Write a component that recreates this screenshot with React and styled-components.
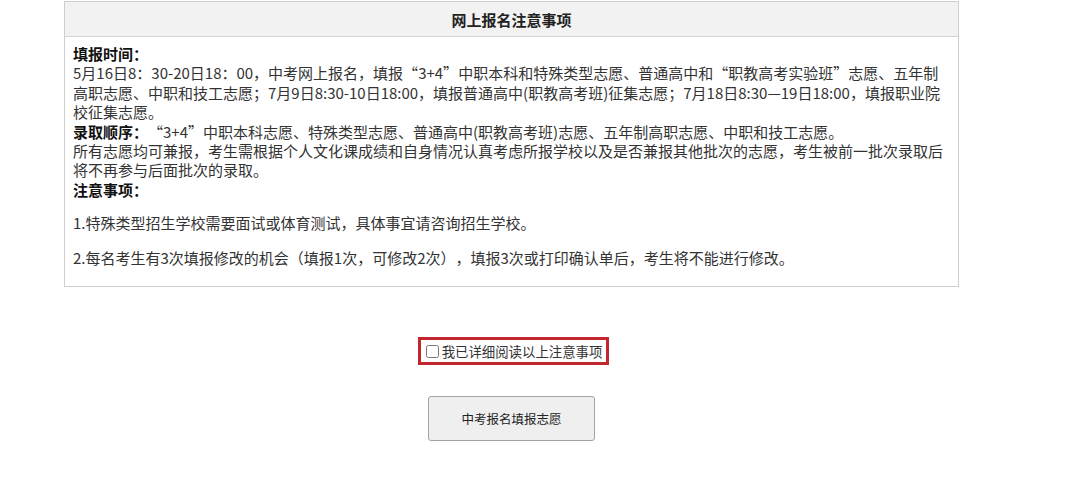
import React from 'react'
import styled, { createGlobalStyle } from 'styled-components'

const GlobalStyle = createGlobalStyle`
  html, body {
    margin: 0;
    padding: 0;
    background: #ffffff;
  }
  body {
    font-family: "Noto Sans CJK SC", "Noto Sans", sans-serif;
    color: #333;
  }
`

const Page = styled.div`
  width: 895px;
  margin: 1px 0 0 64px;
  display: flex;
  flex-direction: column;
  align-items: center;
`

const NoticeBox = styled.section`
  width: 100%;
  box-sizing: border-box;
  border: 1px solid #cfcfcf;
  background: #fff;
`

const NoticeHeader = styled.h3`
  margin: 0;
  height: 34px;
  display: flex;
  align-items: center;
  justify-content: center;
  background: #f2f2f2;
  border-bottom: 1px solid #d4d4d4;
  font-size: 15px;
  font-weight: 700;
  color: #222;
`

const NoticeBody = styled.div`
  padding: 7px 10px 4px 8px;
  font-size: 15px;
  line-height: 19.4px;
  color: #333;
  text-spacing-trim: space-all;
`

const Label = styled.strong`
  font-weight: 700;
  color: #111;
`

// curly quotes kept in their own run so the CJK font draws them full-width
const Quote = styled.span`
  font-family: "Noto Sans CJK SC", sans-serif;
`

const Item = styled.p`
  margin: 14px 0 15px;
`

const ConfirmRow = styled.label`
  margin-top: 50px;
  margin-left: 4px;
  display: flex;
  align-items: center;
  gap: 3px;
  height: 22px;
  padding: 0 4px 0 5px;
  border: 3px solid #c4262d;
  font-size: 13.4px;
  color: #333;
  cursor: pointer;
`

const CheckBox = styled.input`
  margin: 0;
  width: 13px;
  height: 13px;
`

const SubmitButton = styled.button`
  margin-top: 31px;
  width: 167px;
  height: 45px;
  background: #efefef;
  border: 1px solid #a3a3a3;
  border-radius: 3px;
  font-family: "Noto Sans CJK SC", "Noto Sans", sans-serif;
  font-size: 12.5px;
  color: #222;
  cursor: pointer;
`

const Q = ({ children }) => (
  <>
    <Quote>“</Quote>
    {children}
    <Quote>”</Quote>
  </>
)

export default function App() {
  return (
    <>
      <GlobalStyle />
      <Page>
        <NoticeBox>
          <NoticeHeader>网上报名注意事项</NoticeHeader>
          <NoticeBody>
            <Label>填报时间：</Label>
            <br />
            5月16日8：30-20日18：00，中考网上报名，填报<Q>3+4</Q>中职本科和特殊类型志愿、普通高中和<Q>职教高考实验班</Q>志愿、五年制高职志愿、中职和技工志愿；7月9日8:30-10日18:00，填报普通高中(职教高考班)征集志愿；7月18日8:30—19日18:00，填报职业院校征集志愿。
            <br />
            <Label>录取顺序：</Label><Q>3+4</Q>中职本科志愿、特殊类型志愿、普通高中(职教高考班)志愿、五年制高职志愿、中职和技工志愿。
            <br />
            所有志愿均可兼报，考生需根据个人文化课成绩和自身情况认真考虑所报学校以及是否兼报其他批次的志愿，考生被前一批次录取后将不再参与后面批次的录取。
            <br />
            <Label>注意事项：</Label>
            <Item>1.特殊类型招生学校需要面试或体育测试，具体事宜请咨询招生学校。</Item>
            <Item>2.每名考生有3次填报修改的机会（填报1次，可修改2次），填报3次或打印确认单后，考生将不能进行修改。</Item>
          </NoticeBody>
        </NoticeBox>
        <ConfirmRow>
          <CheckBox type="checkbox" />
          我已详细阅读以上注意事项
        </ConfirmRow>
        <SubmitButton type="button">中考报名填报志愿</SubmitButton>
      </Page>
    </>
  )
}
